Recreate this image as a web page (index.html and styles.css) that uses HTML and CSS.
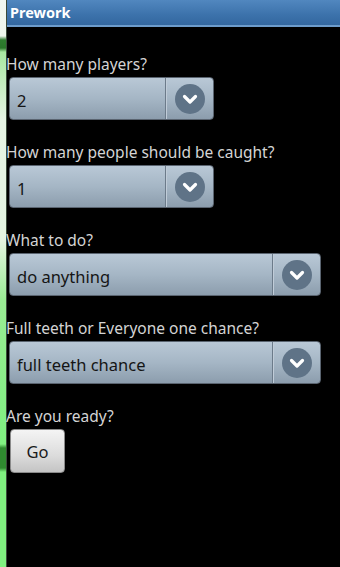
FILE: index.html
```html
<!DOCTYPE html>
<html lang="en">
<head>
  <meta charset="utf-8" />
  <title>Prework</title>
  <link rel="stylesheet" href="styles.css">
</head>
<body>
  <div class="screen">
    <div class="edge"></div>
    <div class="app">
      <div class="titlebar">Prework</div>

      <div class="content">
        <div class="row">
          <label for="players">How many players?</label>
          <div class="spinner narrow" id="players">
            <span class="value">2</span>
            <span class="arrow"><svg width="30" height="30" viewBox="0 0 30 30"><circle cx="15" cy="15" r="15" fill="#5f7387"/><path d="M9.5 12.5 L15 18 L20.5 12.5" fill="none" stroke="#fff" stroke-width="3.2" stroke-linecap="round" stroke-linejoin="round"/></svg></span>
          </div>
        </div>

        <div class="row">
          <label for="caught">How many people should be caught?</label>
          <div class="spinner narrow" id="caught">
            <span class="value">1</span>
            <span class="arrow"><svg width="30" height="30" viewBox="0 0 30 30"><circle cx="15" cy="15" r="15" fill="#5f7387"/><path d="M9.5 12.5 L15 18 L20.5 12.5" fill="none" stroke="#fff" stroke-width="3.2" stroke-linecap="round" stroke-linejoin="round"/></svg></span>
          </div>
        </div>

        <div class="row">
          <label for="todo">What to do?</label>
          <div class="spinner" id="todo">
            <span class="value">do anything</span>
            <span class="arrow"><svg width="30" height="30" viewBox="0 0 30 30"><circle cx="15" cy="15" r="15" fill="#5f7387"/><path d="M9.5 12.5 L15 18 L20.5 12.5" fill="none" stroke="#fff" stroke-width="3.2" stroke-linecap="round" stroke-linejoin="round"/></svg></span>
          </div>
        </div>

        <div class="row">
          <label for="chance">Full teeth or Everyone one chance?</label>
          <div class="spinner" id="chance">
            <span class="value">full teeth chance</span>
            <span class="arrow"><svg width="30" height="30" viewBox="0 0 30 30"><circle cx="15" cy="15" r="15" fill="#5f7387"/><path d="M9.5 12.5 L15 18 L20.5 12.5" fill="none" stroke="#fff" stroke-width="3.2" stroke-linecap="round" stroke-linejoin="round"/></svg></span>
          </div>
        </div>

        <div class="row">
          <label>Are you ready?</label>
          <button class="go">Go</button>
        </div>
      </div>
    </div>
  </div>
</body>
</html>
```

FILE: styles.css
```css
/* whole phone screen */
body {
  margin: 0;
  padding: 0;
  background: #000;
  font-family: "Noto Sans", "Open Sans", sans-serif;
}
.screen {
  display: flex;
  width: 340px;
  height: 567px;
  overflow: hidden;
}
/* strip of the launcher showing on the left */
.edge {
  width: 6px;
  flex: none;
  background: linear-gradient(to bottom,
    #f2f7f0 0, #eef6ec 36px, #2f7d2f 40px, #2a762a 48px, #a8e8a0 52px,
    #e6f4e4 120px, #e4f4e2 240px, #9aec94 300px, #86ee86 400px,
    #80f080 444px, #2f8a2f 448px, #2f8a2f 468px, #80f080 472px, #80f080 567px);
  border-right: 1px solid #3a4a3a;
}
.app {
  flex: 1;
  display: flex;
  flex-direction: column;
}
/* title bar */
.titlebar {
  height: 25px;
  line-height: 25px;
  padding-left: 3px;
  color: #fff;
  font-weight: bold;
  font-size: 14.5px;
  background: linear-gradient(to bottom, #5187bf, #3c72ab 60%, #33679f);
  border-bottom: 2px solid #6d9ccb;
}
.content {
  padding-top: 27px;
}
.row {
  display: flex;
  flex-direction: column;
  align-items: flex-start;
  margin-bottom: 22px;
}
.row label {
  color: #d4d4d4;
  font-size: 15.5px;
  line-height: 20px;
  height: 20px;
  margin-left: -1px;
}
/* spinner (dropdown) */
.spinner {
  display: flex;
  align-items: center;
  box-sizing: border-box;
  width: 312px;
  height: 43px;
  margin-top: 3px;
  margin-left: 2px;
  border-radius: 4px;
  border: 1px solid #5a6470;
  background: linear-gradient(to bottom, #b9c8d6, #a5b6c5 50%, #8c9dad);
  color: #151515;
}
.spinner.narrow {
  width: 205px;
}
.spinner .value {
  flex: 1;
  padding-left: 7px;
  padding-top: 3px;
  font-size: 16.5px;
}
.spinner .arrow {
  display: flex;
  align-items: center;
  justify-content: center;
  align-self: stretch;
  width: 47px;
  border-left: 1px solid #6c7b8a;
  box-shadow: inset 1px 0 0 #c0ccd8;
}
/* go button */
.go {
  margin-top: 3px;
  margin-left: 3px;
  width: 55px;
  height: 44px;
  border: 1px solid #8a8a8a;
  border-radius: 4px;
  background: linear-gradient(to bottom, #f4f4f4, #dcdcdc 60%, #c4c4c4);
  font-family: "Noto Sans", "Open Sans", sans-serif;
  font-size: 16.5px;
  color: #1a1a1a;
  padding: 0;
}
```
